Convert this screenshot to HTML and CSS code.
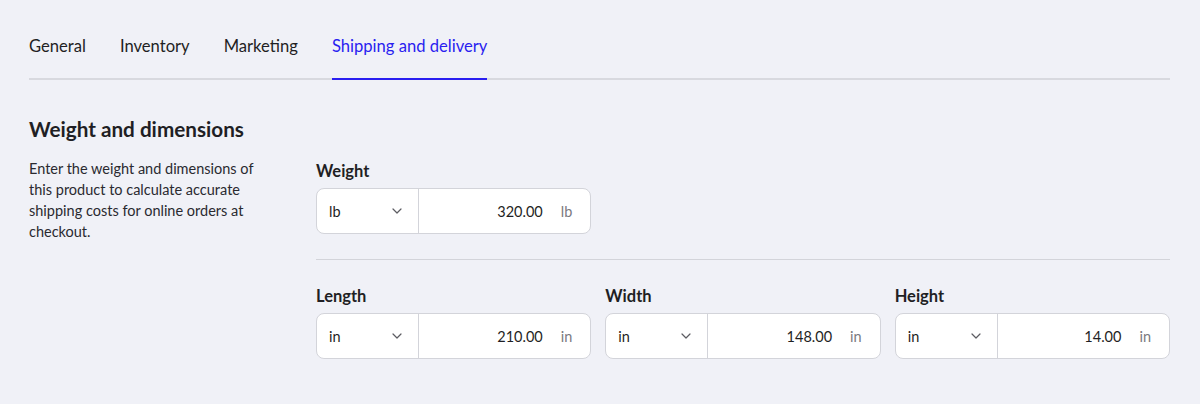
FILE: index.html
```html
<!DOCTYPE html>
<html lang="en">
<head>
    <meta charset="UTF-8">
    <meta name="viewport" content="width=device-width, initial-scale=1.0">
    <title>Shipping and delivery</title>
    <link rel="stylesheet" href="styles.css">
</head>
<body>
    <div class="page">
        <nav class="tabs">
            <a class="tab" href="#">General</a>
            <a class="tab" href="#">Inventory</a>
            <a class="tab" href="#">Marketing</a>
            <a class="tab active" href="#">Shipping and delivery</a>
        </nav>

        <section class="section">
            <h2>Weight and dimensions</h2>
            <div class="section-body">
                <p class="description">Enter the weight and dimensions of this product to calculate accurate shipping costs for online orders at checkout.</p>

                <div class="fields">
                    <div class="field-row">
                        <div class="field">
                            <label>Weight</label>
                            <div class="unit-input">
                                <div class="unit-select">
                                    <span>lb</span>
                                    <svg class="chevron" width="10" height="6" viewBox="0 0 10 6"><path d="M1 1 5 5 9 1" fill="none" stroke="#5c5c62" stroke-width="1.2" stroke-linecap="round" stroke-linejoin="round"/></svg>
                                </div>
                                <div class="unit-value">
                                    <span class="number">320.00</span>
                                    <span class="suffix">lb</span>
                                </div>
                            </div>
                        </div>
                    </div>

                    <hr class="divider">

                    <div class="field-row">
                        <div class="field">
                            <label>Length</label>
                            <div class="unit-input">
                                <div class="unit-select">
                                    <span>in</span>
                                    <svg class="chevron" width="10" height="6" viewBox="0 0 10 6"><path d="M1 1 5 5 9 1" fill="none" stroke="#5c5c62" stroke-width="1.2" stroke-linecap="round" stroke-linejoin="round"/></svg>
                                </div>
                                <div class="unit-value">
                                    <span class="number">210.00</span>
                                    <span class="suffix">in</span>
                                </div>
                            </div>
                        </div>
                        <div class="field">
                            <label>Width</label>
                            <div class="unit-input">
                                <div class="unit-select">
                                    <span>in</span>
                                    <svg class="chevron" width="10" height="6" viewBox="0 0 10 6"><path d="M1 1 5 5 9 1" fill="none" stroke="#5c5c62" stroke-width="1.2" stroke-linecap="round" stroke-linejoin="round"/></svg>
                                </div>
                                <div class="unit-value">
                                    <span class="number">148.00</span>
                                    <span class="suffix">in</span>
                                </div>
                            </div>
                        </div>
                        <div class="field">
                            <label>Height</label>
                            <div class="unit-input">
                                <div class="unit-select">
                                    <span>in</span>
                                    <svg class="chevron" width="10" height="6" viewBox="0 0 10 6"><path d="M1 1 5 5 9 1" fill="none" stroke="#5c5c62" stroke-width="1.2" stroke-linecap="round" stroke-linejoin="round"/></svg>
                                </div>
                                <div class="unit-value">
                                    <span class="number">14.00</span>
                                    <span class="suffix">in</span>
                                </div>
                            </div>
                        </div>
                    </div>
                </div>
            </div>
        </section>
    </div>
</body>
</html>
```

FILE: styles.css
```css
body {
    font-family: Lato, "Noto Sans", sans-serif;
    margin: 0;
    padding: 0;
    background-color: #f0f1f7;
    color: #1f1f24;
}
.page {
    padding: 34px 30px 0 29px;
}
.tabs {
    display: flex;
    gap: 34px;
    border-bottom: 2px solid #d8d9df;
}
.tab {
    font-size: 16.6px;
    line-height: 24px;
    padding-bottom: 20px;
    margin-bottom: -2px;
    color: #1f1f24;
    text-decoration: none;
    border-bottom: 2px solid transparent;
}
.tab.active {
    color: #2a1ef0;
    border-bottom-color: #2a1ef0;
}
.section h2 {
    margin: 37px 0 0;
    font-size: 20.7px;
    line-height: 24px;
    font-weight: 700;
}
.section-body {
    display: grid;
    grid-template-columns: 240px 1fr;
    gap: 47px;
}
.description {
    margin: 17px 0 0;
    font-size: 14.5px;
    line-height: 21px;
    color: #2a2a30;
}
.fields {
    padding-top: 18px;
}
.field-row {
    display: grid;
    grid-template-columns: repeat(3, 1fr);
    gap: 14px;
}
.field label {
    display: block;
    font-size: 16.5px;
    line-height: 24px;
    font-weight: 700;
    margin-bottom: 5px;
}
.unit-input {
    display: flex;
    height: 46px;
    box-sizing: border-box;
    background-color: white;
    border: 1px solid #d3d4da;
    border-radius: 8px;
    font-size: 14.5px;
}
.unit-select {
    width: 102px;
    flex-shrink: 0;
    display: flex;
    align-items: center;
    justify-content: space-between;
    padding: 0 16px 0 12px;
    box-sizing: border-box;
    border-right: 1px solid #d3d4da;
}
.unit-value {
    flex: 1;
    display: flex;
    align-items: center;
    justify-content: flex-end;
    gap: 18px;
    padding-right: 18px;
}
.unit-value .suffix {
    color: #7a7a80;
}
.divider {
    border: none;
    border-top: 1px solid #d3d4da;
    margin: 25px 0 24px;
}
```
